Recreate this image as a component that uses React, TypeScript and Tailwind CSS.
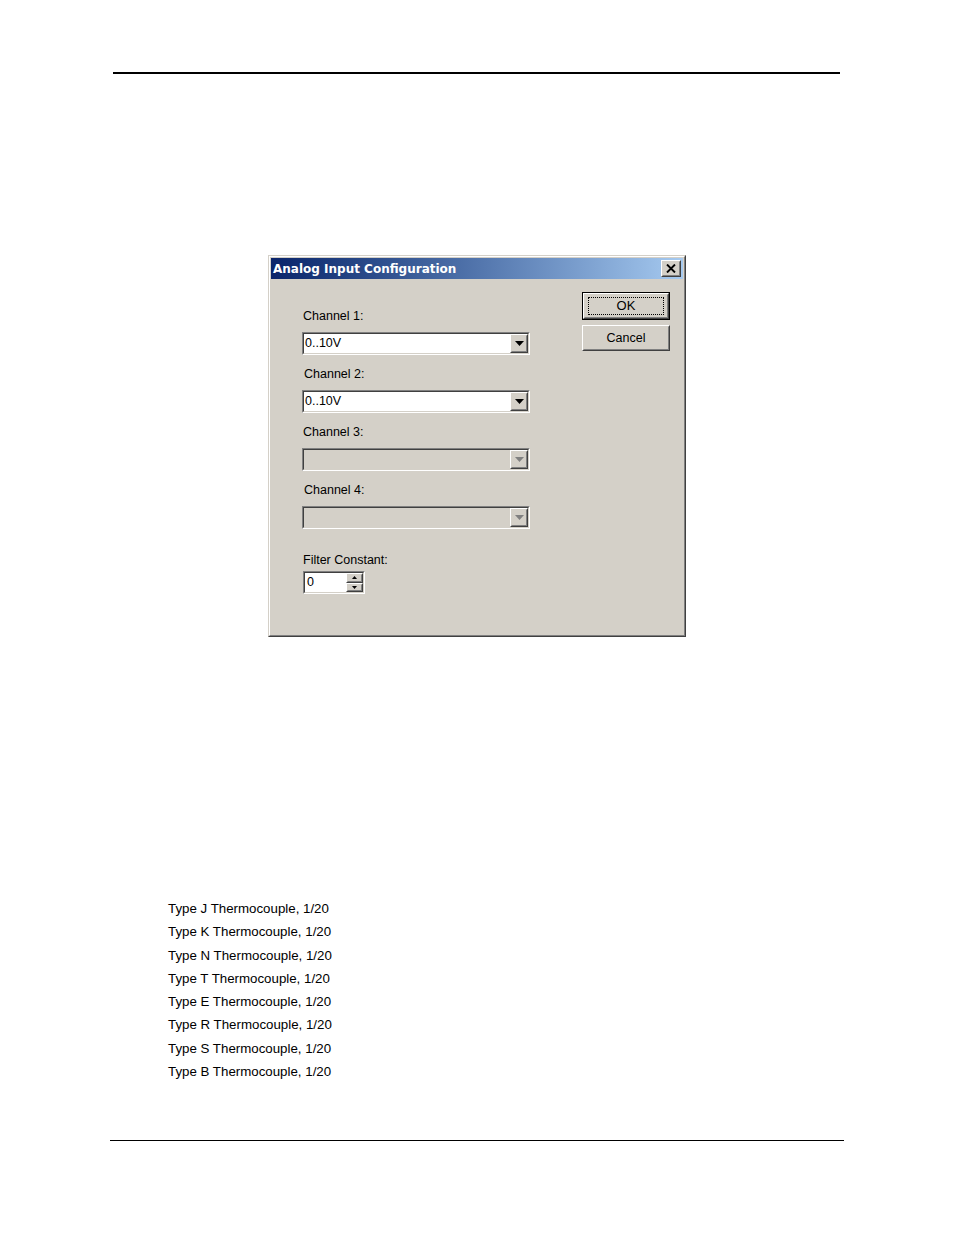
const thermocouples = ['J', 'K', 'N', 'T', 'E', 'R', 'S', 'B'];

function Raised({ className = '', children }: { className?: string; children?: React.ReactNode }) {
  return (
    <div className={`border border-t-white border-l-white border-r-[#404040] border-b-[#404040] ${className}`}>
      <div className="h-full w-full border border-t-[#d4d0c8] border-l-[#d4d0c8] border-r-[#808080] border-b-[#808080] bg-[#d4d0c8] flex items-center justify-center">
        {children}
      </div>
    </div>
  );
}

function Sunken({ className = '', children }: { className?: string; children?: React.ReactNode }) {
  return (
    <div className={`border border-t-[#808080] border-l-[#808080] border-r-white border-b-white ${className}`}>
      <div className="h-full w-full border border-t-[#404040] border-l-[#404040] border-r-[#d4d0c8] border-b-[#d4d0c8] flex">
        {children}
      </div>
    </div>
  );
}

function Arrow({ dir = 'down', color = '#000', size = 7 }: { dir?: 'up' | 'down'; color?: string; size?: number }) {
  const h = Math.ceil(size / 2);
  return (
    <svg width={size} height={h} viewBox={`0 0 ${size} ${h}`}>
      {dir === 'down' ? (
        <polygon points={`0,0 ${size},0 ${size / 2},${h}`} fill={color} />
      ) : (
        <polygon points={`0,${h} ${size},${h} ${size / 2},0`} fill={color} />
      )}
    </svg>
  );
}

function Combo({ value, disabled }: { value?: string; disabled?: boolean }) {
  return (
    <Sunken className="w-[228px] h-[23px]">
      <div className={`flex-1 flex items-center pl-[1px] text-[12.5px] text-black ${disabled ? 'bg-[#d4d0c8]' : 'bg-white'}`}>
        {value}
      </div>
      <Raised className="w-[18px] h-full">
        <Arrow color={disabled ? '#808080' : '#000'} size={9} />
      </Raised>
    </Sunken>
  );
}

function Field({ label, value, disabled, indent }: { label: string; value?: string; disabled?: boolean; indent?: boolean }) {
  return (
    <div className="flex flex-col mb-[12px]">
      <div className={`h-[15px] leading-[15px] text-[12.5px] text-black mb-[8px] ${indent ? 'pl-[2px]' : 'pl-[1px]'}`}>{label}</div>
      <Combo value={value} disabled={disabled} />
    </div>
  );
}

function Dialog() {
  return (
    <div className="mx-auto w-[418px] h-[382px] border border-t-[#d4d0c8] border-l-[#d4d0c8] border-r-[#404040] border-b-[#404040]">
      <div className="h-full w-full border border-t-white border-l-white border-r-[#808080] border-b-[#808080] bg-[#d4d0c8] p-[1px] flex flex-col">
        {/* Title bar */}
        <div className="h-[21px] flex items-center justify-between bg-gradient-to-r from-[#0a246a] to-[#a6caf0] pl-[2px] pr-[2px]">
          <span className="text-white font-bold text-[12px] leading-none" style={{ fontFamily: 'Tahoma, "DejaVu Sans", "Liberation Sans", sans-serif' }}>
            Analog Input Configuration
          </span>
          <Raised className="w-[20px] h-[17px]">
            <svg width="10" height="9" viewBox="0 0 10 9">
              <path d="M1 0.5 L9 8.5 M9 0.5 L1 8.5" stroke="#000" strokeWidth="1.9" />
            </svg>
          </Raised>
        </div>

        {/* Client area */}
        <div className="flex-1 flex justify-between pl-[31px] pr-[13px]">
          <div className="pt-[30px] flex flex-col">
            <Field label="Channel 1:" value="0..10V" />
            <Field label="Channel 2:" value="0..10V" indent />
            <Field label="Channel 3:" disabled />
            <Field label="Channel 4:" disabled indent />
            <div className="mt-[12px] h-[15px] leading-[15px] text-[12.5px] text-black pl-[1px] mb-[3px]">Filter Constant:</div>
            <div className="pl-[1px]">
              <Sunken className="w-[62px] h-[23px]">
                <div className="flex-1 bg-white flex items-center pl-[2px] text-[12.5px] text-black">0</div>
                <div className="w-[17px] h-full flex flex-col bg-white">
                  <Raised className="w-full flex-1">
                    <Arrow dir="up" size={5} />
                  </Raised>
                  <Raised className="w-full flex-1">
                    <Arrow size={5} />
                  </Raised>
                </div>
              </Sunken>
            </div>
          </div>

          <div className="pt-[13px] flex flex-col gap-[5px]">
            <div className="w-[88px] h-[28px] border border-black">
              <Raised className="w-full h-full">
                <div className="w-[76px] h-[18px] border border-dotted border-black flex items-center justify-center text-[13px] text-black">
                  OK
                </div>
              </Raised>
            </div>
            <Raised className="w-[88px] h-[26px]">
              <span className="text-[12.5px] text-black">Cancel</span>
            </Raised>
          </div>
        </div>
      </div>
    </div>
  );
}

export default function App() {
  return (
    <div className="w-[954px] h-[1235px] bg-white flex flex-col" style={{ fontFamily: '"Liberation Sans", Arial, sans-serif' }}>
      <div className="mt-[72px] ml-[113px] w-[727px] h-[2px] bg-black" />

      <div className="mt-[181px]">
        <Dialog />
      </div>

      <div className="mt-[260px] ml-[168px] flex flex-col">
        {thermocouples.map((t) => (
          <div key={t} className="h-[23.3px] leading-[23.3px] text-[13.3px] text-black">
            Type {t} Thermocouple, 1/20
          </div>
        ))}
      </div>

      <div className="mt-[57px] ml-[110px] w-[734px] h-px bg-black" />
    </div>
  );
}
